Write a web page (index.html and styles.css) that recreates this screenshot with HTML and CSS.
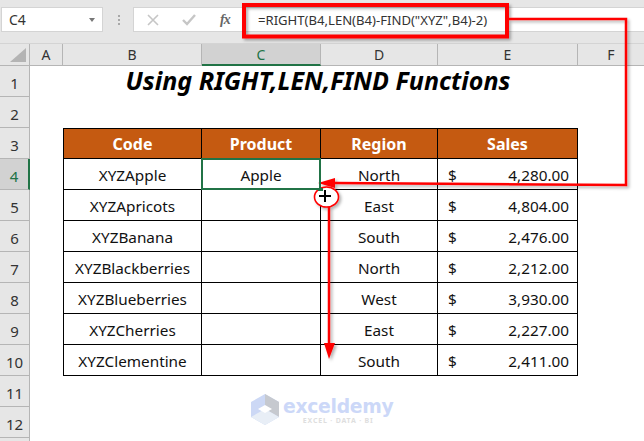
FILE: index.html
```html
<!DOCTYPE html>
<html lang="en">
<head>
<meta charset="utf-8">
<title>Using RIGHT,LEN,FIND Functions</title>
<link rel="stylesheet" href="styles.css">
</head>
<body>
<div class="app">
  <div class="formula-bar">
    <div class="name-box"><span>C4</span><i class="caret"></i></div>
    <div class="dots"><i></i><i></i><i></i></div>
    <div class="fx-box">
      <svg class="fx-icon" width="12" height="12" viewBox="0 0 12 12"><path d="M1 1l10 10M11 1L1 11" stroke="#c6c6c6" stroke-width="1.6" fill="none"/></svg>
      <svg class="fx-icon" width="14" height="12" viewBox="0 0 14 12"><path d="M1 6l4 4 8-9" stroke="#c6c6c6" stroke-width="2.4" fill="none"/></svg>
      <span class="fx">fx</span>
    </div>
    <div class="formula-input">=RIGHT(B4,LEN(B4)-FIND("XYZ",B4)-2)</div>
  </div>
  <div class="sheet">
    <div class="corner"><i></i></div>
    <div class="ch">A</div><div class="ch">B</div><div class="ch ch-active">C</div><div class="ch">D</div><div class="ch">E</div><div class="ch ch-last">F</div>

    <div class="rh">1</div><div></div><div class="title">Using RIGHT,LEN,FIND Functions</div><div></div>
    <div class="rh">2</div><div class="blank"></div>
    <div class="rh">3</div><div></div><div class="c th">Code</div><div class="c th">Product</div><div class="c th">Region</div><div class="c th">Sales</div><div></div>
    <div class="rh rh-active">4</div><div></div><div class="c">XYZApple</div><div class="c active">Apple</div><div class="c">North</div><div class="c money"><span>$</span><span>4,280.00</span></div><div></div>
    <div class="rh">5</div><div></div><div class="c">XYZApricots</div><div class="c"></div><div class="c">East</div><div class="c money"><span>$</span><span>4,804.00</span></div><div></div>
    <div class="rh">6</div><div></div><div class="c">XYZBanana</div><div class="c"></div><div class="c">South</div><div class="c money"><span>$</span><span>2,476.00</span></div><div></div>
    <div class="rh">7</div><div></div><div class="c">XYZBlackberries</div><div class="c"></div><div class="c">North</div><div class="c money"><span>$</span><span>2,212.00</span></div><div></div>
    <div class="rh">8</div><div></div><div class="c">XYZBlueberries</div><div class="c"></div><div class="c">West</div><div class="c money"><span>$</span><span>3,930.00</span></div><div></div>
    <div class="rh">9</div><div></div><div class="c">XYZCherries</div><div class="c"></div><div class="c">East</div><div class="c money"><span>$</span><span>2,227.00</span></div><div></div>
    <div class="rh">10</div><div></div><div class="c">XYZClementine</div><div class="c"></div><div class="c">South</div><div class="c money"><span>$</span><span>2,411.00</span></div><div></div>
    <div class="rh">11</div><div class="blank"></div>
    <div class="rh">12</div><div class="blank"></div>
    <div class="rh"></div><div class="blank"></div>
  </div>

  <svg class="overlay" width="644" height="441" viewBox="0 0 644 441">
    <defs>
      <filter id="soft" x="-5%" y="-5%" width="115%" height="115%"><feDropShadow dx="2" dy="2" stdDeviation="1.5" flood-color="#000" flood-opacity=".3"/></filter>
    </defs>
    <g filter="url(#soft)">
      <rect x="244" y="5" width="263" height="31.500" fill="none" stroke="#f00" stroke-width="4"/>
      <path d="M509 19H626V185L335 183" fill="none" stroke="#f00" stroke-width="2.500"/>
      <path d="M318 183L335 178V188Z" fill="#f00"/>
      <path d="M329 207V346" fill="none" stroke="#f00" stroke-width="2.500"/>
      <path d="M324 343H335L329 359Z" fill="#f00"/>
      <ellipse cx="326.500" cy="197" rx="12" ry="10" fill="#fff" stroke="#f00" stroke-width="1.600"/>
    </g>
    <rect x="318" y="188" width="5" height="3" fill="#217346"/>
    <path d="M325 190v12M319 196h12" stroke="#000" stroke-width="2"/>
    <g>
      <path d="M265 394l14 8v15l-14 8-14-8v-15z" fill="#ccd8f5"/>
      <path d="M265 394l14 8v15l-14-8z" fill="#c6c9cf"/>
      <path d="M251 417l14-8 14 8-14 8z" fill="#e8eef6"/>
      <path d="M258 409l7-4 7 4-7 4z" fill="#fff"/>
    </g>
  </svg>
  <div class="wm"><span class="wm-name">exceldemy</span><span class="wm-tag">EXCEL · DATA · BI</span></div>
</div>
</body>
</html>
```
FILE: styles.css
```css
* { box-sizing: border-box; }
html, body { margin: 0; padding: 0; }
body { width: 644px; height: 441px; overflow: hidden; background: #fff; font-family: "Noto Sans", "Open Sans", sans-serif; color: #000; }
.app { position: relative; width: 644px; height: 441px; overflow: hidden; }

.formula-bar { height: 44px; background: #e6e6e6; display: flex; align-items: flex-start; padding-top: 7px; border-bottom: 1px solid #d4d4d4; }
.name-box { width: 102px; height: 25px; margin-left: 1px; background: #fff; border: 1px solid #d4d4d4; display: flex; align-items: center; justify-content: space-between; padding: 0 7px; font-size: 14px; color: #333; }
.caret { width: 0; height: 0; border: 3.5px solid transparent; border-top: 4px solid #777; border-bottom: 0; }
.dots { width: 30px; height: 25px; display: flex; flex-direction: column; justify-content: center; align-items: center; gap: 2px; padding-left: 1px; }
.dots i { width: 2px; height: 2px; background: #a8a8a8; }
.fx-box { width: 110px; height: 25px; background: #fff; border: 1px solid #d4d4d4; display: flex; align-items: center; gap: 23px; padding-left: 13px; flex: none; }
.fx { font: italic bold 14px "Liberation Serif", serif; color: #666; letter-spacing: -1px; margin-left: 1px; }
.formula-input { flex: 1; height: 25px; background: #fff; border-top: 1px solid #d4d4d4; border-bottom: 1px solid #d4d4d4; padding-left: 15px; display: flex; align-items: center; font-size: 13.1px; color: #333; white-space: nowrap; }

.sheet { display: grid; grid-template-columns: 30px 33px 139px 119px 117px 140px 66px; grid-template-rows: 22px repeat(12, 31px) 3px; background: #fff; }
.corner { background: #e6e6e6; border-right: 1px solid #b5b5b5; border-bottom: 1px solid #b5b5b5; position: relative; }
.corner i { position: absolute; right: 3px; bottom: 3px; width: 0; height: 0; border-style: solid; border-width: 0 0 14px 16px; border-color: transparent transparent #b4b4b4 transparent; }
.ch { background: #e6e6e6; border-right: 1px solid #b5b5b5; border-bottom: 1px solid #b5b5b5; display: flex; align-items: center; justify-content: center; font-size: 14px; color: #333; }
.ch-last { border-right: 0; }
.ch-active { background: #d2d2d2; color: #217346; border-bottom: 2px solid #217346; }
.rh { background: #e6e6e6; border-right: 1px solid #b5b5b5; border-bottom: 1px solid #b5b5b5; display: flex; align-items: center; justify-content: center; font-size: 15px; color: #333; padding-top: 3px; }
.rh-active { background: #d2d2d2; color: #217346; border-right: 2px solid #217346; }
.blank { grid-column: 2 / 8; }
.title { grid-column: 3 / 7; display: flex; align-items: center; justify-content: center; font-size: 25px; font-weight: 700; font-style: italic; white-space: nowrap; padding: 0 5px 3px 0; }
.c { border-right: 1px solid #000; border-bottom: 1px solid #000; display: flex; align-items: center; justify-content: center; font-size: 15.3px; color: #111; white-space: nowrap; padding-top: 1px; }
.th { background: #c55a11; color: #fff; font-weight: 700; font-size: 16px; border-top: 1px solid #000; padding-top: 0; }
.rh + div + .c { border-left: 1px solid #000; }
.active { border: 2px solid #217346; margin: -1px 0 0 -1px; z-index: 1; }
.money { justify-content: space-between; padding-left: 10px; padding-right: 8px; }

.overlay { position: absolute; left: 0; top: 0; pointer-events: none; }
.wm { position: absolute; left: 283px; top: 396px; display: flex; flex-direction: column; align-items: center; }
.wm-name { font: 700 18.8px/21px "DejaVu Sans", sans-serif; color: #ccd8f8; letter-spacing: -.3px; }
.wm-tag { font: 700 7px/8px "Noto Sans", sans-serif; color: #dedede; letter-spacing: .8px; }
```
